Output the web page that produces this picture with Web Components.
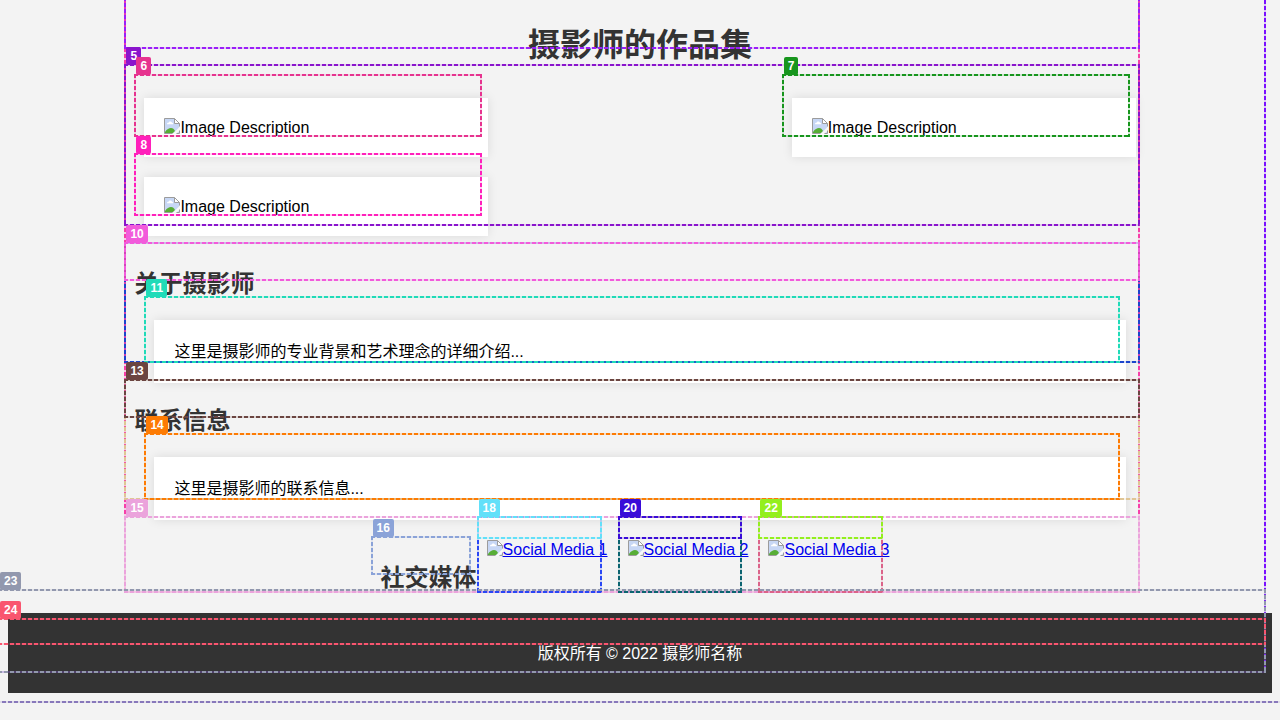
<!DOCTYPE html>
<html lang="zh-CN">
<head>
<meta charset="utf-8">
<title>摄影师的作品集</title>
<style>
  html { background: #f3f3f3; }
  body { margin: 0; font: 16px/23px "Liberation Sans", "Noto Sans CJK SC", sans-serif; color: #000; }
</style>
</head>
<body>
<portfolio-page></portfolio-page>

<template id="mark-box">
  <style>
    :host {
      --dash: color-mix(in srgb, var(--mark) 20%, transparent);
      --across: repeating-linear-gradient(90deg, var(--mark) 0 4px, var(--dash) 4px 6px);
      --down: repeating-linear-gradient(var(--mark) 0 4px, var(--dash) 4px 6px);
      position: absolute; z-index: 1; pointer-events: none;
      inset: -24px 6px 20px -10px;
      background:
        var(--across) top / 100% 2px no-repeat, var(--across) bottom / 100% 2px no-repeat,
        var(--down) left / 2px 100% no-repeat, var(--down) right / 2px 100% no-repeat;
    }
    span {
      position: absolute; left: 2px; top: -17px; padding: 0 4px; border-radius: 2px;
      background: var(--mark); color: #fff; font: bold 12px/18px "Liberation Sans", sans-serif;
    }
    span:empty { display: none; }
  </style>
  <span></span>
</template>

<template id="missing-image">
  <style>
    :host { display: flex; position: relative; height: 19px; line-height: 19px; white-space: nowrap; }
    svg { flex: none; width: 16px; height: 16px; }
    .alt { text-decoration: inherit; }
    :host([linked]) .alt { text-decoration: underline; }
  </style>
  <svg viewBox="0 0 16 16" aria-hidden="true">
    <path d="M.5.5h10l5 5v10H.5z" fill="#c7d7f5"/>
    <path d="M1 15v-1c2-3 4-4 6-4s3 1 4 3l-2 2z" fill="#57ad36"/>
    <path d="M3 6c0-1 1-1.500 1.500-1.200C5 3 7.500 3 8 4.800 9 4.800 9.500 5.500 9 6.200H3z" fill="#fff"/>
    <path d="M16 8.500 8.500 16H12l4-3.500z" fill="#f9f9f9"/>
    <path d="M10.500.5v5h5z" fill="#fff"/>
    <path d="M8.500 15.500H.5V.5h10l5 5v3M10.500.5v5h5M12.500 15.500h3v-3" fill="none" stroke="#9c9c9c"/>
  </svg><span class="alt"></span><slot></slot>
</template>

<template id="content-card">
  <style>
    :host { display: block; position: relative; box-sizing: border-box; padding: 20px; background: #fff; box-shadow: 0 0 10px rgba(0, 0, 0, .1); }
    ::slotted(p) { margin: 0; }
  </style>
  <slot></slot>
</template>

<template id="section-title">
  <style>
    :host { display: block; position: relative; }
    h2 { margin: 0; font-size: 24px; line-height: 35px; color: #333; }
  </style>
  <h2></h2><slot></slot>
</template>

<template id="info-section">
  <style>
    :host { display: block; position: relative; margin-top: 20px; }
    .body { margin: 19px 20px 0; }
  </style>
  <slot name="title"></slot>
  <div class="body"><slot></slot></div>
</template>

<template id="social-row">
  <style>
    :host { display: flex; position: relative; justify-content: center; margin-top: 20px; }
    section-title { margin: 20px 0 18px; }
    a { position: relative; margin: 0 10px; color: #00e; text-decoration: none; }
  </style>
  <mark-box style="--mark:#eba3dc" num="15"></mark-box>
  <section-title text="社交媒体"><mark-box style="--mark:#8ba3d8" num="16"></mark-box></section-title>
  <a href="#social-1"><mark-box style="--mark:#2947f5"></mark-box><missing-image linked alt="Social Media 1"><mark-box style="--mark:#62e0f9" num="18"></mark-box></missing-image></a>
  <a href="#social-2"><mark-box style="--mark:#0b6470"></mark-box><missing-image linked alt="Social Media 2"><mark-box style="--mark:#3a0cd8" num="20"></mark-box></missing-image></a>
  <a href="#social-3"><mark-box style="--mark:#db6389"></mark-box><missing-image linked alt="Social Media 3"><mark-box style="--mark:#93ef1e" num="22"></mark-box></missing-image></a>
</template>

<template id="page-footer">
  <style>
    :host { display: flex; position: relative; box-sizing: border-box; min-height: 80px; align-items: center; background: #333; color: #fff; text-align: center; }
    p { position: relative; flex: 1; margin: 0; }
  </style>
  <mark-box style="--mark:#9298ae" num="23"></mark-box>
  <p>版权所有 © 2022 摄影师名称<mark-box style="--mark:#f9556f" num="24"></mark-box></p>
</template>

<template id="portfolio-page">
  <style>
    :host { display: block; position: relative; padding: 0 8px 27px; overflow: hidden; }
    .document { inset: -24px -4px 17px; }
    .content { display: flow-root; position: relative; }
    main { display: flow-root; position: relative; width: 80%; margin: 0 auto; }
    h1 { position: relative; margin: 21px 0 19px; font-size: 32px; line-height: 48px; color: #333; text-align: center; }
    .gallery { display: flex; position: relative; flex-wrap: wrap; justify-content: space-between; }
    .gallery content-card { width: 34%; margin: 10px; }
  </style>
  <mark-box class="document" style="--mark:#8878bb"></mark-box>
  <div class="content">
    <mark-box style="--mark:#7a10ff"></mark-box>
    <main>
      <mark-box style="--mark:#f73fa9"></mark-box>
      <h1>摄影师的作品集<mark-box style="--mark:#9b1ff8"></mark-box></h1>
      <div class="gallery">
        <mark-box style="--mark:#8a14cc" num="5"></mark-box>
        <content-card><missing-image alt="Image Description"></missing-image><mark-box style="--mark:#e6338f" num="6"></mark-box></content-card>
        <content-card><missing-image alt="Image Description"></missing-image><mark-box style="--mark:#17951d" num="7"></mark-box></content-card>
        <content-card><missing-image alt="Image Description"></missing-image><mark-box style="--mark:#ff20bb" num="8"></mark-box></content-card>
      </div>
      <info-section>
        <mark-box slot="title" style="--mark:#1b44cc"></mark-box>
        <section-title slot="title" text="关于摄影师"><mark-box style="--mark:#f25bdb" num="10"></mark-box></section-title>
        <content-card><p>这里是摄影师的专业背景和艺术理念的详细介绍...</p><mark-box style="--mark:#20dbb8" num="11"></mark-box></content-card>
      </info-section>
      <info-section>
        <mark-box slot="title" style="--mark:#e0c595"></mark-box>
        <section-title slot="title" text="联系信息"><mark-box style="--mark:#6b4541" num="13"></mark-box></section-title>
        <content-card><p>这里是摄影师的联系信息...</p><mark-box style="--mark:#fd7b03" num="14"></mark-box></content-card>
      </info-section>
      <social-row></social-row>
    </main>
    <page-footer></page-footer>
  </div>
</template>

<script>
  class TemplateElement extends HTMLElement {
    constructor() {
      super();
      const template = document.getElementById(this.constructor.tag);
      this.attachShadow({ mode: "open" }).append(document.importNode(template.content, true));
    }
    // Copies an attribute's value into a part of the shadow tree.
    fill(selector, attribute) {
      this.shadowRoot.querySelector(selector).textContent = this.getAttribute(attribute) || "";
    }
  }
  class MarkBox extends TemplateElement {
    static tag = "mark-box";
    connectedCallback() { this.fill("span", "num"); }
  }
  class MissingImage extends TemplateElement {
    static tag = "missing-image";
    connectedCallback() { this.fill(".alt", "alt"); }
  }
  class SectionTitle extends TemplateElement {
    static tag = "section-title";
    connectedCallback() { this.fill("h2", "text"); }
  }
  class ContentCard extends TemplateElement { static tag = "content-card"; }
  class InfoSection extends TemplateElement { static tag = "info-section"; }
  class SocialRow extends TemplateElement { static tag = "social-row"; }
  class PageFooter extends TemplateElement { static tag = "page-footer"; }
  class PortfolioPage extends TemplateElement { static tag = "portfolio-page"; }
  for (const type of [MarkBox, MissingImage, SectionTitle, ContentCard, InfoSection, SocialRow, PageFooter, PortfolioPage]) {
    customElements.define(type.tag, type);
  }
</script>
</body>
</html>
